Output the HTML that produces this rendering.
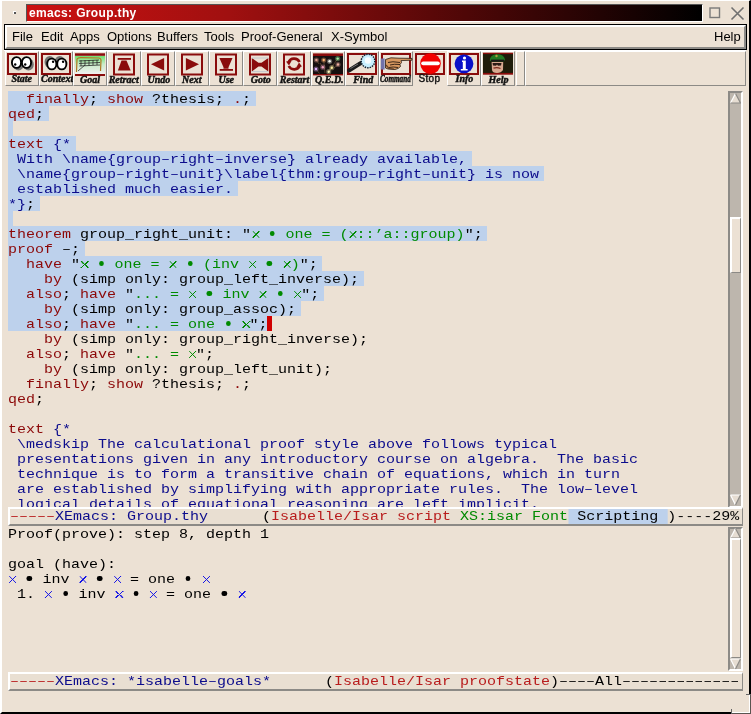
<!DOCTYPE html><html><head><meta charset="utf-8"><style>
*{margin:0;padding:0;box-sizing:border-box}
html,body{width:751px;height:714px;overflow:hidden;background:#ece1d4}
body{position:relative;font-family:"Liberation Sans",sans-serif}
#root{position:absolute;left:0;top:0;width:751px;height:714px;will-change:transform}
.abs{position:absolute}
#frame{position:absolute;left:0;top:0;width:751px;height:714px;border-left:2px solid #fff;border-top:1px solid #fff;border-right:2px solid #000;border-bottom:2px solid #000}
#title{position:absolute;left:26px;top:4px;width:677px;height:18px;border-top:1px solid #555;border-left:1px solid #555;border-bottom:1px solid #fff;border-right:1px solid #fff;
 background:linear-gradient(to right,#cc1111 0%,#a01010 30%,#5a0808 60%,#000 100%);color:#fff;font-weight:bold;font-size:12px;letter-spacing:0.35px;line-height:16px;padding-left:2px}
#menubar{position:absolute;left:4px;top:24px;width:743px;height:26px;border:1px solid #000;}
#menubar .in{position:absolute;left:0;top:0;right:0;bottom:0;border-top:2px solid #fff;border-left:2px solid #fff;border-bottom:2px solid #8c8a86;border-right:2px solid #8c8a86}
.mi{position:absolute;top:3px;font-size:13px;line-height:14px;color:#000}
#toolbar{position:absolute;left:4px;top:50px;width:742px;height:36px;}
.btn{position:absolute;top:51px;width:34px;height:35px;border-left:1px solid #fff;border-top:1px solid #fff;border-right:1px solid #8c8a86;border-bottom:1px solid #8c8a86}
.btn.flat{border-color:transparent}
.lab{position:absolute;white-space:nowrap;font-family:"Liberation Serif",serif;font-weight:bold;font-style:italic;font-size:10px;line-height:10px;color:#111;transform-origin:0 0;-webkit-text-stroke:0.45px #111}
.lab.sans{font-family:"Liberation Sans",sans-serif;font-style:normal;font-weight:normal;font-size:10px;letter-spacing:0.3px;-webkit-text-stroke:0.4px #111}
.lab.cmd{transform:scaleX(0.72)}
.ln{position:absolute;left:8px;height:15px;font-family:"Liberation Mono",monospace;font-size:13px;line-height:17px;transform:scaleX(1.153846);transform-origin:0 0;white-space:pre;color:#000}
.bul{position:relative;color:transparent;letter-spacing:-0.433px}
.sx{letter-spacing:-0.867px;position:relative;color:transparent}
.sx::after{content:"";position:absolute;left:1px;top:3.7px;width:6.2px;height:7.2px;background:linear-gradient(to top right,transparent calc(50% - 0.5px),var(--c) calc(50% - 0.5px),var(--c) calc(50% + 0.5px),transparent calc(50% + 0.5px)),linear-gradient(to bottom right,transparent calc(50% - 0.5px),var(--c) calc(50% - 0.5px),var(--c) calc(50% + 0.5px),transparent calc(50% + 0.5px))}
.bul::after{content:"";position:absolute;left:1.6px;top:4.4px;width:4.2px;height:4.6px;border-radius:50%;background:var(--c)}
.hl{position:absolute;left:8px;height:15px;background:#bdd1ec}
.cur{position:absolute;width:5px;height:15px;background:#d00000}
.ml{position:absolute;left:8px;width:735px;height:19px;background:#e9dfd2;border-top:2px solid #fff;border-left:2px solid #fff;border-bottom:2px solid #8c8a86;border-right:1px solid #8c8a86}
.ml .t{position:absolute;left:0px;top:-1px;font-family:"Liberation Mono",monospace;font-size:13px;line-height:17px;transform:scaleX(1.153846);transform-origin:0 0;white-space:pre;color:#000}
.sb{position:absolute;left:728px;width:15px;background:#bdb6ad;border-left:2px solid #8c8a86;border-top:2px solid #8c8a86;border-right:2px solid #fff;border-bottom:2px solid #fff}
</style></head><body><div id="root">
<div id="frame"></div>
<div class="abs" style="left:13px;top:11px;width:3px;height:3px;background:#fff"></div><div class="abs" style="left:14px;top:12px;width:2px;height:2px;background:#555"></div>
<div id="title">emacs: Group.thy</div>
<svg class="abs" style="left:708px;top:6px" width="14" height="14"><rect x="2" y="2" width="9.5" height="9.5" fill="none" stroke="#7a7a7a" stroke-width="1.4"/></svg>
<svg class="abs" style="left:730px;top:6px" width="15" height="15"><path d="M1.5 1.5L13.5 13.5M13.5 1.5L1.5 13.5" stroke="#707070" stroke-width="1.6"/></svg>
<div class="abs" style="left:4px;top:50px;width:742px;height:1px;background:#fff"></div>
<div id="menubar"><div class="in"><div class="mi" style="left:5px">File</div><div class="mi" style="left:34px">Edit</div><div class="mi" style="left:63px">Apps</div><div class="mi" style="left:100px">Options</div><div class="mi" style="left:150px">Buffers</div><div class="mi" style="left:197px">Tools</div><div class="mi" style="left:234px">Proof-General</div><div class="mi" style="left:324px">X-Symbol</div><div class="mi" style="left:707px">Help</div></div></div>
<div class="btn" style="left:5px"></div><svg class="abs" style="left:5px;top:50px" width="34" height="28"><rect x="3" y="4" width="28" height="20" fill="none" stroke="#8a0c0c" stroke-width="2"/><ellipse cx="13.5" cy="14.5" rx="5.3" ry="6" fill="#666" opacity="0.9"/><ellipse cx="23.5" cy="14.5" rx="5.3" ry="6" fill="#666" opacity="0.9"/><ellipse cx="11.5" cy="12.5" rx="4.6" ry="5.4" fill="#fff" stroke="#000" stroke-width="1.9"/><circle cx="10.2" cy="14.5" r="1.2" fill="#000"/><ellipse cx="21.5" cy="12.5" rx="4.6" ry="5.4" fill="#fff" stroke="#000" stroke-width="1.9"/><circle cx="20.2" cy="14.5" r="1.2" fill="#000"/></svg><div class="lab serif" style="left:11.4px;top:73.6px">State</div><div class="btn" style="left:39px"></div><svg class="abs" style="left:39px;top:50px" width="34" height="28"><rect x="3" y="4" width="28" height="20" fill="none" stroke="#8a0c0c" stroke-width="2"/><ellipse cx="10.8" cy="12.0" rx="5.3" ry="6" fill="#666" opacity="0.9"/><ellipse cx="20.8" cy="12.0" rx="5.3" ry="6" fill="#666" opacity="0.9"/><ellipse cx="12.8" cy="14.0" rx="4.6" ry="5.4" fill="#fff" stroke="#000" stroke-width="1.9"/><circle cx="14.1" cy="11.8" r="1.2" fill="#000"/><ellipse cx="22.8" cy="14.0" rx="4.6" ry="5.4" fill="#fff" stroke="#000" stroke-width="1.9"/><circle cx="24.1" cy="11.8" r="1.2" fill="#000"/></svg><div class="lab serif" style="left:41.0px;top:73.6px">Context</div><div class="btn" style="left:73px"></div><svg class="abs" style="left:73px;top:50px" width="34" height="28"><defs><linearGradient id="gg" x1="0" y1="0" x2="0" y2="1"><stop offset="0" stop-color="#6fe06f"/><stop offset="0.45" stop-color="#c8ecc8"/><stop offset="1" stop-color="#f0f0f0"/></linearGradient></defs><rect x="2" y="6" width="30" height="18" fill="url(#gg)"/><rect x="2" y="3.3" width="30" height="2.5" fill="#8a0c0c"/><rect x="2" y="24" width="30" height="2" fill="#8a0c0c"/><path d="M3.5 22 L4 9 Q5 7.5 8 7.6 L26 8 Q28 8.5 28 10 L27.5 21" fill="none" stroke="#b07820" stroke-width="1.2"/><path d="M6 11 L26 10 M6 13.5 L27 12.5 M6.5 16 L27 15 M8 10 L8 16 M12 10 L12 15.5 M16 10 L16 15.5 M20 10 L20 15 M24 10 L24 15 M5 21 L12 15" fill="none" stroke="#222" stroke-width="0.9" opacity="0.85"/></svg><div class="lab serif" style="left:80.0px;top:74.6px">Goal</div><div class="btn" style="left:107px"></div><svg class="abs" style="left:107px;top:50px" width="34" height="28"><rect x="7" y="4.5" width="20" height="20" fill="none" stroke="#8a0c0c" stroke-width="2"/><rect x="10.7" y="8" width="13.3" height="1.8" fill="#8a0c0c"/><path d="M14.5 10.5 L19.5 10.5 L23.7 20.6 L10.9 20.6 Z" fill="#8a0c0c"/></svg><div class="lab serif" style="left:108.7px;top:75.1px">Retract</div><div class="btn" style="left:141px"></div><svg class="abs" style="left:141px;top:50px" width="34" height="28"><rect x="7" y="4.5" width="20" height="20" fill="none" stroke="#8a0c0c" stroke-width="2"/><path d="M10 14.2 L23.1 8 L23.1 20.4 Z" fill="#8a0c0c"/></svg><div class="lab serif" style="left:147.5px;top:75.1px">Undo</div><div class="btn" style="left:175px"></div><svg class="abs" style="left:175px;top:50px" width="34" height="28"><rect x="7" y="4.5" width="20" height="20" fill="none" stroke="#8a0c0c" stroke-width="2"/><path d="M24 14.2 L10.9 8 L10.9 20.4 Z" fill="#8a0c0c"/></svg><div class="lab serif" style="left:182.0px;top:75.1px">Next</div><div class="btn" style="left:209px"></div><svg class="abs" style="left:209px;top:50px" width="34" height="28"><rect x="7" y="4.5" width="20" height="20" fill="none" stroke="#8a0c0c" stroke-width="2"/><path d="M10.4 8 L23.5 8 L19.5 17.2 L19.5 18.8 L14.5 18.8 L14.5 17.2 Z" fill="#8a0c0c"/><rect x="10.7" y="19" width="13.3" height="1.8" fill="#8a0c0c"/></svg><div class="lab serif" style="left:218.5px;top:74.6px">Use</div><div class="btn" style="left:243px"></div><svg class="abs" style="left:243px;top:50px" width="34" height="28"><rect x="7" y="4.5" width="20" height="20" fill="none" stroke="#8a0c0c" stroke-width="2"/><path d="M8.8 8 L15.5 12.8 L18.5 12.8 L25.3 8 L25.3 21.6 L18.5 16.4 L15.5 16.4 L8.8 21.6 Z" fill="#8a0c0c"/><path d="M8.8 8 L25.3 8 M8.8 21.6 L25.3 21.6" stroke="#b8c0cc" stroke-width="0.8"/></svg><div class="lab serif" style="left:250.7px;top:74.6px">Goto</div><div class="btn" style="left:277px"></div><svg class="abs" style="left:277px;top:50px" width="34" height="28"><rect x="7" y="4.5" width="20" height="20" fill="none" stroke="#8a0c0c" stroke-width="2"/><path d="M11.5 12.5 A6 6 0 0 1 22.5 12" fill="none" stroke="#8a0c0c" stroke-width="2.6"/><path d="M22.8 15.5 A6 6 0 0 1 11.8 16" fill="none" stroke="#8a0c0c" stroke-width="2.6"/><path d="M9 11.5 L14.5 11 L12 15.5 Z" fill="#8a0c0c"/><path d="M25 16.5 L19.5 17 L22 12.5 Z" fill="#8a0c0c"/></svg><div class="lab serif" style="left:279.8px;top:74.6px">Restart</div><div class="btn" style="left:311px"></div><svg class="abs" style="left:311px;top:50px" width="34" height="28"><rect x="2" y="3.4" width="30" height="22" fill="#8a0c0c"/><rect x="2" y="6" width="30" height="18" fill="#161010"/><path d="M5 19 L8.5 23.5 M12.7 10 L14 23 M17.7 21.7 L26.7 8.6 M11.8 17.2 L9 13 M5.4 10 L8 14 M27 14.5 L23 18" stroke="#705838" stroke-width="0.9" opacity="0.75"/><circle cx="12.7" cy="10" r="2.6" fill="#ffb070" opacity="0.35"/><circle cx="12.7" cy="10" r="1.2" fill="#ffb070"/><circle cx="5.4" cy="10" r="2.6" fill="#e0a090" opacity="0.35"/><circle cx="5.4" cy="10" r="1.2" fill="#e0a090"/><circle cx="18.6" cy="11.3" r="2.6" fill="#f8f8f0" opacity="0.35"/><circle cx="18.6" cy="11.3" r="1.2" fill="#f8f8f0"/><circle cx="26.7" cy="8.6" r="2.6" fill="#a0f0a0" opacity="0.35"/><circle cx="26.7" cy="8.6" r="1.2" fill="#a0f0a0"/><circle cx="27" cy="14.5" r="2.6" fill="#f0b0a0" opacity="0.35"/><circle cx="27" cy="14.5" r="1.2" fill="#f0b0a0"/><circle cx="5" cy="19" r="2.6" fill="#e0b0ff" opacity="0.35"/><circle cx="5" cy="19" r="1.2" fill="#e0b0ff"/><circle cx="11.8" cy="17.2" r="2.6" fill="#f0a0c0" opacity="0.35"/><circle cx="11.8" cy="17.2" r="1.2" fill="#f0a0c0"/><circle cx="20.8" cy="17.7" r="2.6" fill="#fff0a0" opacity="0.35"/><circle cx="20.8" cy="17.7" r="1.2" fill="#fff0a0"/><circle cx="17.7" cy="21.7" r="2.6" fill="#fff8c0" opacity="0.35"/><circle cx="17.7" cy="21.7" r="1.2" fill="#fff8c0"/></svg><div class="lab serif" style="left:315.0px;top:74.6px">Q.E.D.</div><div class="btn" style="left:345px"></div><svg class="abs" style="left:345px;top:50px" width="34" height="28"><rect x="3" y="4" width="28" height="20" fill="none" stroke="#8a0c0c" stroke-width="2"/><path d="M4 20.5 L15.5 13.2" stroke="#1a1a1a" stroke-width="4" stroke-linecap="round"/><path d="M5.5 18.5 L13 14" stroke="#8a8a8a" stroke-width="0.8"/><circle cx="23" cy="11" r="6.8" fill="#c8f0ff" stroke="#123" stroke-width="1.5" stroke-dasharray="1.5 1"/><circle cx="23" cy="10.5" r="3.2" fill="#fff" opacity="0.85"/></svg><div class="lab serif" style="left:353.2px;top:74.6px">Find</div><div class="btn" style="left:379px"></div><svg class="abs" style="left:379px;top:50px" width="34" height="28"><rect x="3" y="4" width="28" height="20" fill="none" stroke="#8a0c0c" stroke-width="2"/><rect x="1.8" y="8.5" width="4.2" height="11" fill="#7272a8"/><rect x="5.6" y="8.5" width="0.8" height="11" fill="#eee"/><path d="M6.5 9.5 L12 7.8 L20 8.2 L33 8.4 L33 10.2 L22 10.6 L22.5 12.5 L21 14.5 L21.5 16.5 L19 18.5 L16 19.5 L9 19 L6.5 18 Z" fill="#d89860" stroke="#2a1a10" stroke-width="0.8"/><path d="M9 12.5 Q13 11 21 12.5 M11 15 Q15 13.8 21 14.5 M10 17.5 Q14 16.5 19 17.5" stroke="#2a1a10" stroke-width="0.9" fill="none"/><path d="M7 15 L10 18.5 L15 19" stroke="#3a2010" stroke-width="1.2" fill="none" opacity="0.7"/></svg><div class="lab cmd" style="left:380.4px;top:73.9px">Command</div><div class="btn flat" style="left:413px"></div><svg class="abs" style="left:413px;top:50px" width="34" height="28"><rect x="3" y="4" width="28" height="20" fill="none" stroke="#8a0c0c" stroke-width="2"/><circle cx="17.5" cy="13.6" r="10.3" fill="#f20000"/><rect x="8.2" y="11.4" width="18.6" height="3.8" rx="1.9" fill="#fff"/></svg><div class="lab sans" style="left:418.5px;top:73.6px">Stop</div><div class="btn" style="left:447px"></div><svg class="abs" style="left:447px;top:50px" width="34" height="28"><rect x="3" y="4" width="28" height="20" fill="none" stroke="#8a0c0c" stroke-width="2"/><circle cx="17" cy="13.8" r="9.4" fill="#0a10c8"/><circle cx="17.5" cy="8" r="1.6" fill="#fff"/><path d="M15 10.5 L18.8 10.5 L18.8 19 L20.6 19 L20.6 20.5 L13.8 20.5 L13.8 19 L15.8 19 L15.8 12 L15 12 Z" fill="#fff"/></svg><div class="lab serif" style="left:455.5px;top:74.0px">Info</div><div class="btn" style="left:481px"></div><svg class="abs" style="left:481px;top:50px" width="34" height="28"><rect x="2" y="2.7" width="30" height="22" fill="#8a0c0c"/><rect x="2" y="4.1" width="30" height="18.8" fill="#1f1c0a"/><path d="M10.6 12 L22.2 12 L22 20 Q20 23 16 22.9 Q11.5 23 11 20 Z" fill="#d8a890"/><path d="M11.5 13 L20.5 13 L20 15.5 L17 15.8 L16 14.5 L15 15.8 L12 15.5 Z" fill="#2a1a14"/><path d="M12.5 18.2 Q16 17 19.5 18.5" stroke="#7a2a1a" stroke-width="1.3" fill="none"/><path d="M8.8 10.5 Q9 5 15 4.2 Q23 4 24 9.5 L23 11.3 L10 11.3 Z" fill="#237a23"/><rect x="10" y="9.6" width="13" height="1.8" fill="#181818"/><circle cx="15.5" cy="6" r="1.2" fill="#b0a040"/></svg><div class="lab serif" style="left:488.6px;top:74.6px">Help</div>
<div class="abs" style="left:516px;top:51px;width:9px;height:35px;border-left:1px solid #fff;border-top:1px solid #fff;border-right:1px solid #8c8a86;border-bottom:1px solid #8c8a86"></div>
<div class="abs" style="left:525px;top:51px;width:221px;height:35px;border-left:1px solid #fff;border-top:1px solid #fff;border-right:1px solid #8c8a86;border-bottom:1px solid #8c8a86"></div>
<div class="hl" style="top:91px;width:248px"></div><div class="ln" style="top:91px">  <span style="color:#8c0808">finally</span>; <span style="color:#8c0808">show</span> ?thesis; <span style="color:#8c0808">.</span>;</div><div class="hl" style="top:106px;width:41px"></div><div class="ln" style="top:106px"><span style="color:#8c0808">qed</span>;</div><div class="hl" style="top:121px;width:5px"></div><div class="ln" style="top:121px"></div><div class="hl" style="top:136px;width:68px"></div><div class="ln" style="top:136px"><span style="color:#8c0808">text</span> <span style="color:#0c0c8c">{*</span></div><div class="hl" style="top:151px;width:464px"></div><div class="ln" style="top:151px"><span style="color:#0c0c8c"> With \name{group–right–inverse} already available,</span></div><div class="hl" style="top:166px;width:536px"></div><div class="ln" style="top:166px"><span style="color:#0c0c8c"> \name{group–right–unit}\label{thm:group–right–unit} is now</span></div><div class="hl" style="top:181px;width:230px"></div><div class="ln" style="top:181px"><span style="color:#0c0c8c"> established much easier.</span></div><div class="hl" style="top:196px;width:32px"></div><div class="ln" style="top:196px"><span style="color:#0c0c8c">*}</span>;</div><div class="hl" style="top:211px;width:5px"></div><div class="ln" style="top:211px"></div><div class="hl" style="top:226px;width:479px"></div><div class="ln" style="top:226px"><span style="color:#8c0808">theorem</span> group_right_unit: &quot;<span style="color:#008a00"><span class="sx" style="--c:#008a00">x</span> <span class="bul" style="--c:#008a00">•</span> one = (<span class="sx" style="--c:#008a00">x</span>::’a::group)</span>&quot;;</div><div class="hl" style="top:241px;width:77px"></div><div class="ln" style="top:241px"><span style="color:#8c0808">proof</span> –;</div><div class="hl" style="top:256px;width:314px"></div><div class="ln" style="top:256px">  <span style="color:#8c0808">have</span> &quot;<span style="color:#008a00"><span class="sx" style="--c:#008a00">x</span> <span class="bul" style="--c:#008a00">•</span> one = <span class="sx" style="--c:#008a00">x</span> <span class="bul" style="--c:#008a00">•</span> (inv <span class="sx" style="--c:#008a00">x</span> <span class="bul" style="--c:#008a00">•</span> <span class="sx" style="--c:#008a00">x</span>)</span>&quot;;</div><div class="hl" style="top:271px;width:356px"></div><div class="ln" style="top:271px">    <span style="color:#8c0808">by</span> (simp only: group_left_inverse);</div><div class="hl" style="top:286px;width:316px"></div><div class="ln" style="top:286px">  <span style="color:#8c0808">also</span>; <span style="color:#8c0808">have</span> &quot;<span style="color:#008a00">... = <span class="sx" style="--c:#008a00">x</span> <span class="bul" style="--c:#008a00">•</span> inv <span class="sx" style="--c:#008a00">x</span> <span class="bul" style="--c:#008a00">•</span> <span class="sx" style="--c:#008a00">x</span></span>&quot;;</div><div class="hl" style="top:301px;width:293px"></div><div class="ln" style="top:301px">    <span style="color:#8c0808">by</span> (simp only: group_assoc);</div><div class="hl" style="top:316px;width:259px"></div><div class="cur" style="top:316px;left:267px"></div><div class="ln" style="top:316px">  <span style="color:#8c0808">also</span>; <span style="color:#8c0808">have</span> &quot;<span style="color:#008a00">... = one <span class="bul" style="--c:#008a00">•</span> <span class="sx" style="--c:#008a00">x</span></span>&quot;;</div><div class="ln" style="top:331px">    <span style="color:#8c0808">by</span> (simp only: group_right_inverse);</div><div class="ln" style="top:346px">  <span style="color:#8c0808">also</span>; <span style="color:#8c0808">have</span> &quot;<span style="color:#008a00">... = <span class="sx" style="--c:#008a00">x</span></span>&quot;;</div><div class="ln" style="top:361px">    <span style="color:#8c0808">by</span> (simp only: group_left_unit);</div><div class="ln" style="top:376px">  <span style="color:#8c0808">finally</span>; <span style="color:#8c0808">show</span> ?thesis; <span style="color:#8c0808">.</span>;</div><div class="ln" style="top:391px"><span style="color:#8c0808">qed</span>;</div><div class="ln" style="top:406px"></div><div class="ln" style="top:421px"><span style="color:#8c0808">text</span> <span style="color:#0c0c8c">{*</span></div><div class="ln" style="top:436px"><span style="color:#0c0c8c"> \medskip The calculational proof style above follows typical</span></div><div class="ln" style="top:451px"><span style="color:#0c0c8c"> presentations given in any introductory course on algebra.  The basic</span></div><div class="ln" style="top:466px"><span style="color:#0c0c8c"> technique is to form a transitive chain of equations, which in turn</span></div><div class="ln" style="top:481px"><span style="color:#0c0c8c"> are established by simplifying with appropriate rules.  The low–level</span></div><div class="ln" style="top:496px"><span style="color:#0c0c8c"> logical details of equational reasoning are left implicit.</span></div>
<div class="sb" style="top:91px;height:417px"></div>
<svg class="abs" style="left:730px;top:93px" width="11" height="11"><path d="M5.5 0.5 L10.5 10 L0.5 10 Z" fill="#e6ddd2"/><path d="M5.5 0.5 L0.5 10" stroke="#fff" stroke-width="1.2"/><path d="M0.5 10 L10.5 10 L5.5 0.5" fill="none" stroke="#8c8a86" stroke-width="1.2"/></svg>
<div class="abs" style="left:730px;top:217px;width:11px;height:56px;background:#ece1d4;border-left:2px solid #fff;border-top:2px solid #fff;border-right:1px solid #8c8a86;border-bottom:1px solid #8c8a86"></div>
<svg class="abs" style="left:730px;top:494px" width="11" height="12"><path d="M0.5 1 L10.5 1 L5.5 11 Z" fill="#e6ddd2"/><path d="M0.5 1 L10.5 1 M0.5 1 L5.5 11" stroke="#fff" stroke-width="1.2"/><path d="M10.5 1 L5.5 11" stroke="#8c8a86" stroke-width="1.2"/></svg>
<div class="ml" style="top:507px"><div class="t"><span style="color:#b81c1c">–––––</span><span style="color:#0c0c8c">XEmacs: Group.thy</span>      (<span style="color:#b81c1c">Isabelle/Isar script</span> <span style="color:#008a00">XS:isar Font</span><span style="background:#bdd1ec"> Scripting </span>)----29%</div></div>
<div class="ln" style="top:526px">Proof(prove): step 8, depth 1</div><div class="ln" style="top:541px"></div><div class="ln" style="top:556px">goal (have):</div><div class="ln" style="top:571px"><span style="color:#1414e6"><span class="sx" style="--c:#1414e6">x</span></span> <span class="bul" style="--c:#000000">•</span> inv <span style="color:#1414e6"><span class="sx" style="--c:#1414e6">x</span></span> <span class="bul" style="--c:#000000">•</span> <span style="color:#1414e6"><span class="sx" style="--c:#1414e6">x</span></span> = one <span class="bul" style="--c:#000000">•</span> <span style="color:#1414e6"><span class="sx" style="--c:#1414e6">x</span></span></div><div class="ln" style="top:586px"> 1. <span style="color:#1414e6"><span class="sx" style="--c:#1414e6">x</span></span> <span class="bul" style="--c:#000000">•</span> inv <span style="color:#1414e6"><span class="sx" style="--c:#1414e6">x</span></span> <span class="bul" style="--c:#000000">•</span> <span style="color:#1414e6"><span class="sx" style="--c:#1414e6">x</span></span> = one <span class="bul" style="--c:#000000">•</span> <span style="color:#1414e6"><span class="sx" style="--c:#1414e6">x</span></span></div>
<div class="sb" style="top:527px;height:144px"></div>
<svg class="abs" style="left:730px;top:528px" width="11" height="11"><path d="M5.5 0.5 L10.5 10 L0.5 10 Z" fill="#e6ddd2"/><path d="M5.5 0.5 L0.5 10" stroke="#fff" stroke-width="1.2"/><path d="M0.5 10 L10.5 10 L5.5 0.5" fill="none" stroke="#8c8a86" stroke-width="1.2"/></svg>
<div class="abs" style="left:730px;top:538px;width:11px;height:120px;background:#ece1d4;border-left:2px solid #fff;border-top:2px solid #fff;border-right:1px solid #8c8a86;border-bottom:1px solid #8c8a86"></div>
<svg class="abs" style="left:730px;top:658px" width="11" height="12"><path d="M0.5 1 L10.5 1 L5.5 11 Z" fill="#e6ddd2"/><path d="M0.5 1 L10.5 1 M0.5 1 L5.5 11" stroke="#fff" stroke-width="1.2"/><path d="M10.5 1 L5.5 11" stroke="#8c8a86" stroke-width="1.2"/></svg>
<div class="ml" style="top:672px"><div class="t"><span style="color:#b81c1c">–––––</span><span style="color:#0c0c8c">XEmacs: *isabelle–goals*</span>      (<span style="color:#b81c1c">Isabelle/Isar proofstate</span>)––––All–––––––––––––</div></div>
<div class="abs" style="left:731px;top:694px;width:20px;height:20px;background:#ece1d4;border-right:1px solid #5a5550;border-bottom:1px solid #5a5550"><div style="position:absolute;left:0;top:1px;right:0;bottom:0;border-right:1px solid #fff;border-bottom:1px solid #fff"></div></div>
<div class="abs" style="left:746px;top:694px;width:5px;height:1px;background:#666"></div>
<div class="abs" style="left:731px;top:709px;width:1px;height:5px;background:#666"></div>
</div></body></html>
